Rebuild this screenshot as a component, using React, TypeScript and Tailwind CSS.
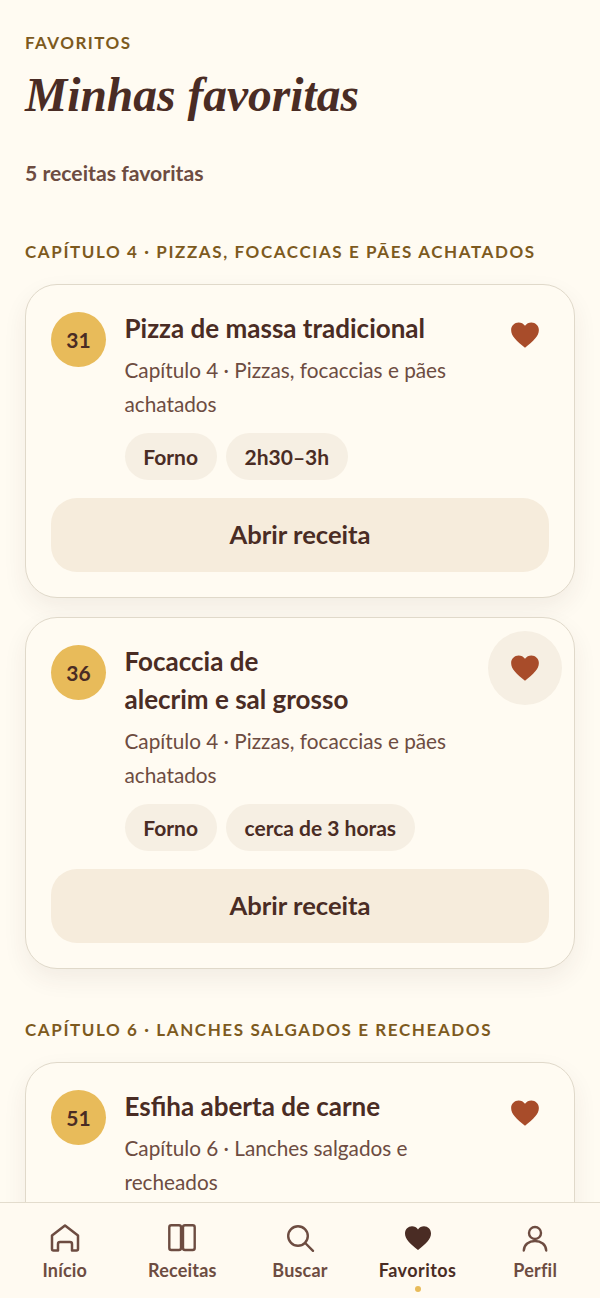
const sans = "font-['Lato','Noto_Sans',sans-serif]";

function Heart({ className }: { className: string }) {
  return (
    <svg viewBox="0 0 24 24" className={className} fill="currentColor" aria-hidden="true">
      <path d="M12 21.6C5.6 16.4 1.6 12.9 1.600 8.300 1.600 5 4.200 2.600 7.200 2.600c1.900 0 3.700.9 4.800 2.500 1.100-1.600 2.900-2.500 4.800-2.500 3 0 5.600 2.400 5.600 5.700 0 4.600-4 8.100-10.400 13.300z" />
    </svg>
  );
}

function Card({ n, title, desc, tags, active, action = true }: { n: number; title: string; desc: string; tags?: string[]; active?: boolean; action?: boolean }) {
  return (
    <article className={`relative rounded-[32px] border border-[#e0d9ca] bg-[#fffbf2] px-[25px] pt-[24px] shadow-[0_10px_24px_rgba(74,44,36,0.07)] ${action ? "pb-[25px]" : "pb-[80px]"}`}>
      <button className={`absolute right-[12px] top-[13px] flex h-[74px] w-[74px] items-center justify-center rounded-full text-[#a84c2a] ${active ? "bg-[#f6efe3]" : ""}`}>
        <Heart className="h-[32px] w-[32px]" />
      </button>
      <div className="flex gap-[18.5px]">
        <div className="mt-[3px] flex h-[55px] w-[55px] shrink-0 items-center justify-center rounded-full bg-[#e8bb5a] text-[21px] font-bold text-[#4a2c24]">{n}</div>
        <div className="min-w-0 flex-1">
          <h3 className="pr-[74px] text-[26px] font-bold leading-[38px] text-[#4a2c24] text-balance">{title}</h3>
          <p className="mt-[7px] pr-[60px] text-[20.75px] leading-[33.5px] text-[#6d4c41]">{desc}</p>
          {tags && (
            <div className="mt-[12px] flex gap-[9px]">
              {tags.map((t) => (
                <span key={t} className="flex h-[47px] items-center rounded-full bg-[#f6efe3] px-[18.75px] text-[21px] font-bold text-[#4a2c24]">{t}</span>
              ))}
            </div>
          )}
        </div>
      </div>
      {action && (
        <button className="mt-[18px] flex h-[74px] w-full items-center justify-center rounded-[26px] bg-[#f6ecdc] pb-[2px] text-[25.6px] font-bold text-[#4a2c24]">Abrir receita</button>
      )}
    </article>
  );
}

function Nav({ label, active, children }: { label: string; active?: boolean; children: React.ReactNode }) {
  return (
    <div className={`relative flex flex-col items-center ${active ? "text-[#4a2c24]" : "text-[#6d4c41]"}`}>
      <div className="flex h-[36px] items-center justify-center">{children}</div>
      <span className={`mt-[1px] text-[18px] font-bold leading-[26px] ${active ? "tracking-[0.45px]" : "tracking-[0.2px]"}`}>{label}</span>
      {active && <span className="absolute top-[66px] h-[6px] w-[6px] rounded-full bg-[#e8bb5a]" />}
    </div>
  );
}

const iconCls = "h-[32px] w-[32px]";

export default function App() {
  return (
    <div className={`flex h-[1298px] w-[600px] flex-col overflow-hidden bg-[#fffbf2] ${sans}`}>
      <main className="min-h-0 flex-1 overflow-hidden px-[25px] pt-[32px]">
        <p className="text-[17px] font-bold leading-[22px] tracking-[1.45px] text-[#7d5a1e]">FAVORITOS</p>
        <h1 className="mt-[12px] font-['Liberation_Serif',serif] text-[47.5px] font-bold italic leading-[58px] text-[#4a2c24]">Minhas favoritas</h1>
        <p className="mt-[34px] text-[21.2px] font-bold leading-[30px] text-[#6d4c41]">5 receitas favoritas</p>

        <h2 className="mt-[51px] text-[17px] font-bold leading-[26px] tracking-[1.6px] text-[#7d5a1e]">CAPÍTULO 4 · PIZZAS, FOCACCIAS E PÃES ACHATADOS</h2>
        <div className="mt-[19px] flex flex-col gap-[19px]">
          <Card n={31} title="Pizza de massa tradicional" desc="Capítulo 4 · Pizzas, focaccias e pães achatados" tags={["Forno", "2h30–3h"]} />
          <Card n={36} title="Focaccia de alecrim e sal grosso" desc="Capítulo 4 · Pizzas, focaccias e pães achatados" tags={["Forno", "cerca de 3 horas"]} active />
        </div>

        <h2 className="mt-[48px] text-[17px] font-bold leading-[26px] tracking-[1.6px] text-[#7d5a1e]">CAPÍTULO 6 · LANCHES SALGADOS E RECHEADOS</h2>
        <div className="mt-[19px]">
          <Card n={51} title="Esfiha aberta de carne" desc="Capítulo 6 · Lanches salgados e recheados" action={false} />
        </div>
      </main>

      <nav className="grid h-[96px] shrink-0 grid-cols-5 border-t border-[#e3dccd] bg-[#fffaf1] px-[6px] pt-[17px]">
        <Nav label="Início">
          <svg viewBox="0 0 32 32" className={iconCls} fill="none" stroke="currentColor" strokeWidth="2.5" strokeLinejoin="round" strokeLinecap="round">
            <path d="M3 13.500 16 3.500 29 13.500V27a1.500 1.500 0 0 1-1.500 1.500H23V22a2 2 0 0 0-2-2H11a2 2 0 0 0-2 2v6.500H4.500A1.500 1.500 0 0 1 3 27z" />
          </svg>
        </Nav>
        <Nav label="Receitas">
          <svg viewBox="0 0 32 32" className={iconCls} fill="none" stroke="currentColor" strokeWidth="2.4" strokeLinejoin="round">
            <rect x="3.300" y="3.300" width="11.700" height="24.700" rx="2" />
            <rect x="17" y="3.300" width="11.700" height="24.700" rx="2" />
          </svg>
        </Nav>
        <Nav label="Buscar">
          <svg viewBox="0 0 32 32" className={iconCls} fill="none" stroke="currentColor" strokeWidth="2.4" strokeLinecap="round">
            <circle cx="14" cy="14" r="9.800" />
            <path d="m21.200 21 7.800 7.800" />
          </svg>
        </Nav>
        <Nav label="Favoritos" active>
          <Heart className="h-[30px] w-[30px]" />
        </Nav>
        <Nav label="Perfil">
          <svg viewBox="0 0 32 32" className={iconCls} fill="none" stroke="currentColor" strokeWidth="2.4" strokeLinecap="round">
            <circle cx="16" cy="11" r="6" />
            <path d="M4.800 28.500C5 22.500 10 19 16 19s11 3.500 11.200 9.500" />
          </svg>
        </Nav>
      </nav>
    </div>
  );
}
